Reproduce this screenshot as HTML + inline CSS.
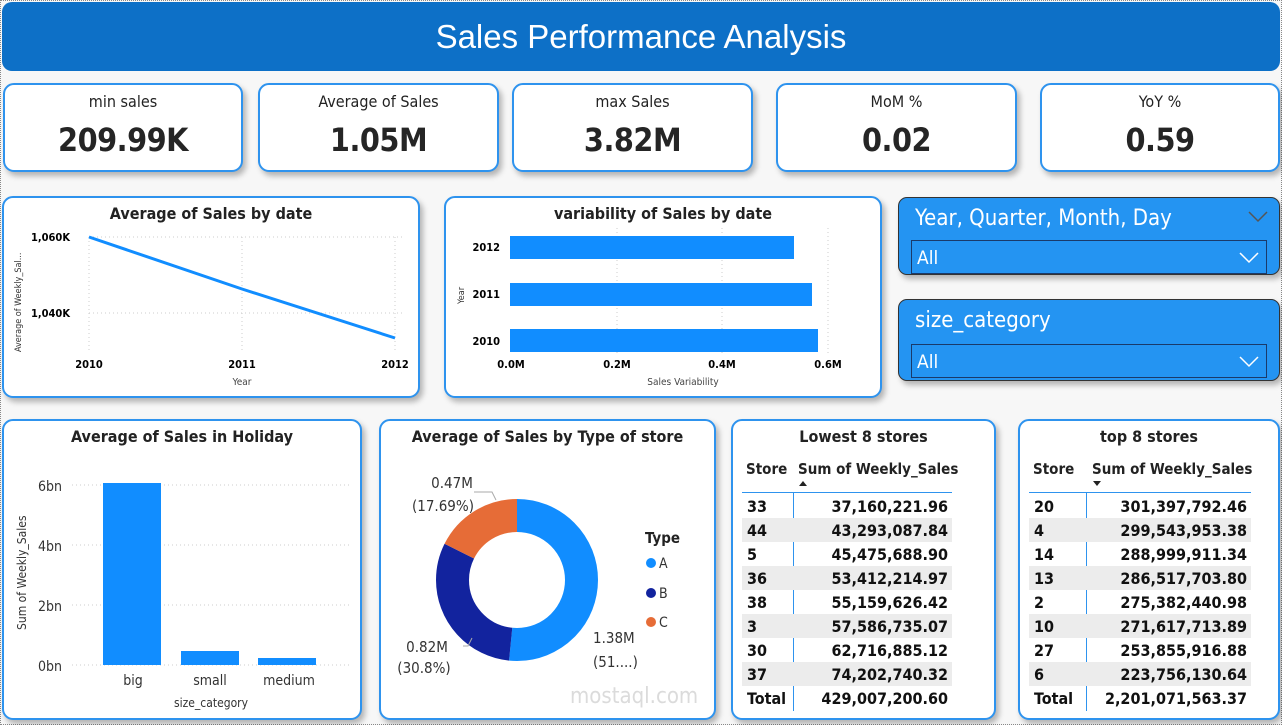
<!DOCTYPE html>
<html><head><meta charset="utf-8"><style>
*{box-sizing:border-box;margin:0;padding:0}
body{width:1282px;height:725px;background:#f7f7f7;font-family:"DejaVu Sans Condensed","Liberation Sans",sans-serif;position:relative;overflow:hidden;color:#222}
.frame{position:absolute;left:0;top:0;width:1282px;height:725px;border:1px dotted #888}
.hdr{position:absolute;left:2px;top:2px;width:1278px;height:69px;background:#0d70c7;border-radius:10px;color:#fff;font-family:"Liberation Sans",sans-serif;font-size:33px;text-align:center;line-height:69px}
.card{position:absolute;background:#fff;border:2px solid #2e93ee;border-radius:11px;box-shadow:3px 4px 6px rgba(0,0,0,.28)}
.kl{position:absolute;left:0;right:0;top:7px;text-align:center;font-size:16px;color:#222}
.kv{position:absolute;left:0;right:0;top:36px;text-align:center;font-size:32px;font-weight:bold;color:#252525;letter-spacing:-0.5px}
.ct{position:absolute;left:0;right:0;top:6px;text-align:center;font-size:16px;font-weight:bold;color:#222}
.sl{position:absolute;background:#2494f2;border:1px solid #333;border-radius:9px;box-shadow:3px 4px 6px rgba(0,0,0,.28);color:#fff}
.sl .t{position:absolute;left:16px;top:8px;font-size:22px}
.sl .b{position:absolute;left:12px;right:12px;top:42px;height:34px;border:1px solid #1a3a6a;font-size:19px;padding:6px 0 0 5px}
table{position:absolute;border-collapse:collapse;font-size:16px}
td{height:24px;font-weight:bold;color:#111}
tr.g td{background:#ececec}
</style></head><body>
<div class="frame"></div>
<div class="hdr">Sales Performance Analysis</div>

<div class="card" style="left:3px;top:83px;width:240px;height:89px"><div class="kl">min sales</div><div class="kv">209.99K</div></div>
<div class="card" style="left:258px;top:83px;width:241px;height:89px"><div class="kl">Average of Sales</div><div class="kv">1.05M</div></div>
<div class="card" style="left:512px;top:83px;width:241px;height:89px"><div class="kl">max Sales</div><div class="kv">3.82M</div></div>
<div class="card" style="left:776px;top:83px;width:241px;height:89px"><div class="kl">MoM %</div><div class="kv">0.02</div></div>
<div class="card" style="left:1040px;top:83px;width:240px;height:89px"><div class="kl">YoY %</div><div class="kv">0.59</div></div>

<div class="card" style="left:2px;top:196px;width:418px;height:202px"><div class="ct">Average of Sales by date</div></div>
<svg style="position:absolute;left:0;top:0" width="1282" height="725">
<g font-family="DejaVu Sans Condensed,Liberation Sans,sans-serif">
<line x1="89" y1="237" x2="402" y2="237" stroke="#ccc" stroke-dasharray="1 3"/>
<line x1="89" y1="313" x2="402" y2="313" stroke="#ccc" stroke-dasharray="1 3"/>
<line x1="89" y1="237" x2="89" y2="350" stroke="#ccc" stroke-dasharray="1 3"/>
<line x1="242" y1="237" x2="242" y2="350" stroke="#ccc" stroke-dasharray="1 3"/>
<line x1="395" y1="237" x2="395" y2="350" stroke="#ccc" stroke-dasharray="1 3"/>
<polyline points="89,237 242,289 395,338" fill="none" stroke="#118dff" stroke-width="3"/>
<text x="70" y="241" font-size="11" font-weight="bold" text-anchor="end">1,060K</text>
<text x="70" y="317" font-size="11" font-weight="bold" text-anchor="end">1,040K</text>
<text x="89" y="368" font-size="11" font-weight="bold" text-anchor="middle">2010</text>
<text x="242" y="368" font-size="11" font-weight="bold" text-anchor="middle">2011</text>
<text x="395" y="368" font-size="11" font-weight="bold" text-anchor="middle">2012</text>
<text x="242" y="385" font-size="10" text-anchor="middle" fill="#444">Year</text>
<text transform="translate(21,352) rotate(-90)" font-size="9" fill="#333">Average of Weekly_Sal...</text>
</g></svg>

<div class="card" style="left:444px;top:196px;width:438px;height:202px"><div class="ct">variability of Sales by date</div></div>
<svg style="position:absolute;left:0;top:0" width="1282" height="725">
<g font-family="DejaVu Sans Condensed,Liberation Sans,sans-serif">
<line x1="617" y1="228" x2="617" y2="354" stroke="#ccc" stroke-dasharray="1 3"/>
<line x1="722" y1="228" x2="722" y2="354" stroke="#ccc" stroke-dasharray="1 3"/>
<line x1="828" y1="228" x2="828" y2="354" stroke="#ccc" stroke-dasharray="1 3"/>
<rect x="510" y="236" width="284" height="23" fill="#118dff"/>
<rect x="510" y="283" width="302" height="23" fill="#118dff"/>
<rect x="510" y="329" width="308" height="23" fill="#118dff"/>
<text x="500" y="251" font-size="11" font-weight="bold" text-anchor="end">2012</text>
<text x="500" y="298" font-size="11" font-weight="bold" text-anchor="end">2011</text>
<text x="500" y="345" font-size="11" font-weight="bold" text-anchor="end">2010</text>
<text x="511" y="368" font-size="11" font-weight="bold" text-anchor="middle">0.0M</text>
<text x="617" y="368" font-size="11" font-weight="bold" text-anchor="middle">0.2M</text>
<text x="722" y="368" font-size="11" font-weight="bold" text-anchor="middle">0.4M</text>
<text x="828" y="368" font-size="11" font-weight="bold" text-anchor="middle">0.6M</text>
<text x="683" y="385" font-size="10" text-anchor="middle" fill="#444">Sales Variability</text>
<text transform="translate(464,304) rotate(-90)" font-size="9" fill="#333">Year</text>
</g></svg>

<div class="sl" style="left:898px;top:197px;width:382px;height:78px"><div class="t">Year, Quarter, Month, Day</div>
<svg style="position:absolute;right:10px;top:12px" width="22" height="14"><polyline points="2,2 11,11 20,2" fill="none" stroke="#555" stroke-width="1.5"/></svg>
<div class="b" style="top:42px;height:34px">All<svg style="position:absolute;right:6px;top:10px" width="22" height="14"><polyline points="2,2 11,11 20,2" fill="none" stroke="#fff" stroke-width="1.5"/></svg></div></div>
<div class="sl" style="left:898px;top:299px;width:382px;height:82px"><div class="t">size_category</div>
<div class="b" style="top:44px;height:34px">All<svg style="position:absolute;right:6px;top:10px" width="22" height="14"><polyline points="2,2 11,11 20,2" fill="none" stroke="#fff" stroke-width="1.5"/></svg></div></div>

<div class="card" style="left:2px;top:419px;width:360px;height:301px"><div class="ct">Average of Sales in Holiday</div></div>
<svg style="position:absolute;left:0;top:0" width="1282" height="725">
<g font-family="DejaVu Sans Condensed,Liberation Sans,sans-serif" fill="#333">
<line x1="72" y1="485" x2="350" y2="485" stroke="#ccc" stroke-dasharray="1 3"/>
<line x1="72" y1="545" x2="350" y2="545" stroke="#ccc" stroke-dasharray="1 3"/>
<line x1="72" y1="605" x2="350" y2="605" stroke="#ccc" stroke-dasharray="1 3"/>
<line x1="72" y1="665" x2="350" y2="665" stroke="#ccc" stroke-dasharray="1 3"/>
<rect x="103" y="483" width="58" height="182" fill="#118dff"/>
<rect x="181" y="651" width="58" height="14" fill="#118dff"/>
<rect x="258" y="658" width="58" height="7" fill="#118dff"/>
<text x="62" y="491" font-size="14" text-anchor="end">6bn</text>
<text x="62" y="551" font-size="14" text-anchor="end">4bn</text>
<text x="62" y="611" font-size="14" text-anchor="end">2bn</text>
<text x="62" y="671" font-size="14" text-anchor="end">0bn</text>
<text x="133" y="685" font-size="14" text-anchor="middle">big</text>
<text x="210" y="685" font-size="14" text-anchor="middle">small</text>
<text x="289" y="685" font-size="14" text-anchor="middle">medium</text>
<text x="211" y="707" font-size="12" text-anchor="middle">size_category</text>
<text transform="translate(26,630) rotate(-90)" font-size="12">Sum of Weekly_Sales</text>
</g></svg>

<div class="card" style="left:379px;top:419px;width:337px;height:301px"><div class="ct">Average of Sales by Type of store</div></div>
<svg style="position:absolute;left:0;top:0" width="1282" height="725">
<g font-family="DejaVu Sans Condensed,Liberation Sans,sans-serif" fill="#333">
<g transform="translate(517,580) rotate(-90)">
<circle r="64.5" fill="none" stroke="#118dff" stroke-width="33" stroke-dasharray="208.9 405.3"/>
<circle r="64.5" fill="none" stroke="#12239e" stroke-width="33" stroke-dasharray="0 208.9 124.8 405.3"/>
<circle r="64.5" fill="none" stroke="#e66c37" stroke-width="33" stroke-dasharray="0 333.7 71.6 405.3"/>
</g>
<text x="452" y="488" font-size="15" text-anchor="middle">0.47M</text>
<text x="443" y="511" font-size="15" text-anchor="middle">(17.69%)</text>
<text x="427" y="652" font-size="15" text-anchor="middle">0.82M</text>
<text x="424" y="673" font-size="15" text-anchor="middle">(30.8%)</text>
<text x="593" y="643" font-size="15">1.38M</text>
<text x="593" y="667" font-size="15">(51....)</text>
<polyline points="474,492 492,492 496,500" fill="none" stroke="#aaa"/>
<polyline points="463,646 468,646 472,638" fill="none" stroke="#aaa"/>
<text x="645" y="543" font-size="15" font-weight="bold" fill="#222">Type</text>
<circle cx="651" cy="563" r="5" fill="#118dff"/><text x="659" y="568" font-size="14">A</text>
<circle cx="651" cy="593" r="5" fill="#12239e"/><text x="659" y="598" font-size="14">B</text>
<circle cx="651" cy="622" r="5" fill="#e66c37"/><text x="659" y="627" font-size="14">C</text>
<text x="570" y="703" font-size="22" fill="#ccc" opacity=".7">mostaql.com</text>
</g></svg>

<div class="card" style="left:731px;top:419px;width:265px;height:301px"><div class="ct" style="top:6px">Lowest 8 stores</div>
<div style="position:absolute;left:13px;top:39px;font-size:15px;font-weight:bold">Store</div>
<div style="position:absolute;left:65px;top:39px;font-size:15px;font-weight:bold">Sum of Weekly_Sales</div>
<svg style="position:absolute;left:66px;top:59px" width="10" height="6"><polygon points="0,6 4,1 8,6" fill="#222"/></svg>
<div style="position:absolute;left:9px;top:71px;width:210px;border-top:1.5px solid #2e93ee"></div>
<div style="position:absolute;left:60px;top:72px;height:218px;border-left:1.5px solid #2e93ee"></div>
<table style="left:9px;top:73px;width:210px">
<tr><td style="padding-left:5px">33</td><td align="right" style="padding-right:4px">37,160,221.96</td></tr>
<tr class="g"><td style="padding-left:5px">44</td><td align="right" style="padding-right:4px">43,293,087.84</td></tr>
<tr><td style="padding-left:5px">5</td><td align="right" style="padding-right:4px">45,475,688.90</td></tr>
<tr class="g"><td style="padding-left:5px">36</td><td align="right" style="padding-right:4px">53,412,214.97</td></tr>
<tr><td style="padding-left:5px">38</td><td align="right" style="padding-right:4px">55,159,626.42</td></tr>
<tr class="g"><td style="padding-left:5px">3</td><td align="right" style="padding-right:4px">57,586,735.07</td></tr>
<tr><td style="padding-left:5px">30</td><td align="right" style="padding-right:4px">62,716,885.12</td></tr>
<tr class="g"><td style="padding-left:5px">37</td><td align="right" style="padding-right:4px">74,202,740.32</td></tr>
<tr><td style="padding-left:5px">Total</td><td align="right" style="padding-right:4px">429,007,200.60</td></tr>
</table></div>

<div class="card" style="left:1018px;top:419px;width:262px;height:301px"><div class="ct" style="top:6px">top 8 stores</div>
<div style="position:absolute;left:13px;top:39px;font-size:15px;font-weight:bold">Store</div>
<div style="position:absolute;left:72px;top:39px;font-size:15px;font-weight:bold">Sum of Weekly_Sales</div>
<svg style="position:absolute;left:73px;top:60px" width="10" height="6"><polygon points="0,0 8,0 4,5" fill="#222"/></svg>
<div style="position:absolute;left:9px;top:71px;width:222px;border-top:1.5px solid #2e93ee"></div>
<div style="position:absolute;left:66px;top:72px;height:218px;border-left:1.5px solid #2e93ee"></div>
<table style="left:9px;top:73px;width:222px">
<tr><td style="padding-left:5px">20</td><td align="right" style="padding-right:4px">301,397,792.46</td></tr>
<tr class="g"><td style="padding-left:5px">4</td><td align="right" style="padding-right:4px">299,543,953.38</td></tr>
<tr><td style="padding-left:5px">14</td><td align="right" style="padding-right:4px">288,999,911.34</td></tr>
<tr class="g"><td style="padding-left:5px">13</td><td align="right" style="padding-right:4px">286,517,703.80</td></tr>
<tr><td style="padding-left:5px">2</td><td align="right" style="padding-right:4px">275,382,440.98</td></tr>
<tr class="g"><td style="padding-left:5px">10</td><td align="right" style="padding-right:4px">271,617,713.89</td></tr>
<tr><td style="padding-left:5px">27</td><td align="right" style="padding-right:4px">253,855,916.88</td></tr>
<tr class="g"><td style="padding-left:5px">6</td><td align="right" style="padding-right:4px">223,756,130.64</td></tr>
<tr><td style="padding-left:5px">Total</td><td align="right" style="padding-right:4px">2,201,071,563.37</td></tr>
</table></div>
</body></html>
